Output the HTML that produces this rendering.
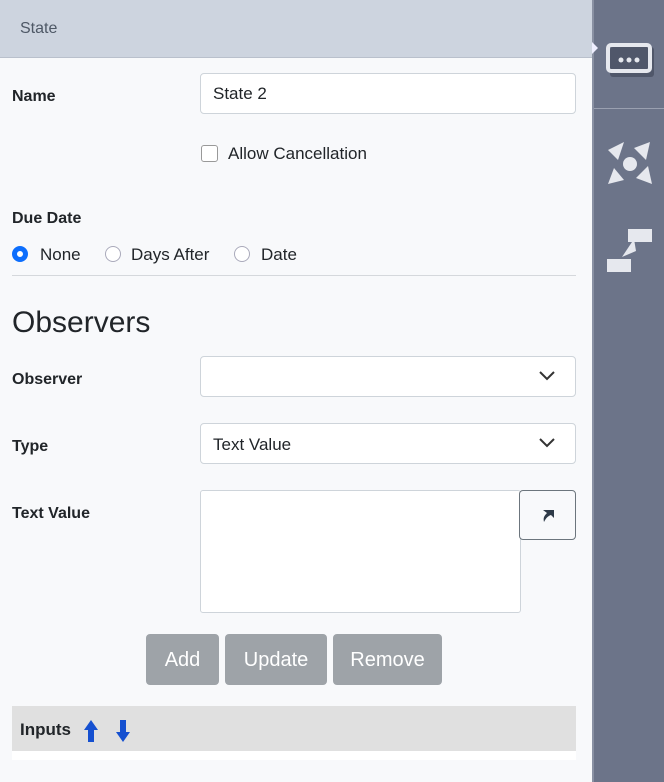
<!DOCTYPE html>
<html><head><style>
*{box-sizing:border-box;margin:0;padding:0}
body{width:664px;height:782px;background:#f8f9fb;font-family:"Liberation Sans",sans-serif;color:#212529;position:relative;overflow:hidden;font-size:16px}
.a{position:absolute}
.hdr{left:0;top:0;width:592px;height:58px;background:#cdd4df;border-bottom:1px solid #b9c0cc}
.side{left:592px;top:0;width:72px;height:782px;background:#6c7489;border-left:2px solid #8a91a3}
.lbl{font-weight:bold;font-size:16px;left:12px}
.inp{background:#fff;border:1px solid #ced4da;border-radius:4px;left:200px;width:376px;height:41px;padding:10px 12px;font-size:17px}
.btn{background:#9ea3a8;color:#fff;border-radius:4px;height:51px;top:634px;font-size:20px;text-align:center;line-height:53px}
.radio{width:16px;height:16px;border-radius:50%;border:1px solid #aab;background:#fff}
</style></head><body>
<div class="a hdr"><span class="a" style="left:20px;top:20px;color:#4e5866;font-size:16px">State</span></div>
<div class="a side">
<div class="a" style="left:-2px;top:42px;width:0;height:0;border-top:6px solid transparent;border-bottom:6px solid transparent;border-left:6px solid #eef"></div>
<svg class="a" style="left:10px;top:40px" width="52" height="40"><rect x="6" y="7" width="44" height="30" rx="3" fill="#50576a"/><rect x="4" y="5" width="42" height="26" rx="3" fill="none" stroke="#e6e8ee" stroke-width="4"/><circle cx="17" cy="20" r="2.5" fill="#e6e8ee"/><circle cx="25" cy="20" r="2.5" fill="#e6e8ee"/><circle cx="33" cy="20" r="2.5" fill="#e6e8ee"/></svg>
<div class="a" style="left:0;top:108px;width:72px;height:1px;background:#9aa0b0"></div>
<svg class="a" style="left:10px;top:138px" width="52" height="56" fill="#e6e8ee"><circle cx="26" cy="26" r="7"/><path d="M4 12 L20 4 L14 22Z"/><path d="M46 4 L30 10 L42 22Z"/><path d="M4 46 L10 30 L20 42Z"/><path d="M48 46 L32 40 L44 28Z"/></svg>
<svg class="a" style="left:10px;top:225px" width="52" height="52"><rect x="24" y="4" width="24" height="13" fill="#e6e8ee"/><rect x="3" y="34" width="24" height="13" fill="#e6e8ee"/><path d="M18 32 L30 14 L32 26Z" fill="#e6e8ee"/></svg>
</div>
<div class="a lbl" style="top:88px">Name</div>
<div class="a inp" style="top:73px">State 2</div>
<div class="a" style="left:201px;top:145px;width:17px;height:17px;border:1px solid #999;border-radius:3px;background:#fff"></div>
<div class="a" style="left:228px;top:144px;font-size:17px">Allow Cancellation</div>
<div class="a lbl" style="top:210px">Due Date</div>
<div class="a radio" style="left:12px;top:246px;border:5px solid #0d6efd"></div>
<div class="a" style="left:40px;top:245px;font-size:17px">None</div>
<div class="a radio" style="left:105px;top:246px"></div>
<div class="a" style="left:131px;top:245px;font-size:17px">Days After</div>
<div class="a radio" style="left:234px;top:246px"></div>
<div class="a" style="left:261px;top:245px;font-size:17px">Date</div>
<div class="a" style="left:12px;top:275px;width:564px;height:1px;background:#d5d8dc"></div>
<div class="a" style="left:12px;top:306px;font-size:30px">Observers</div>
<div class="a lbl" style="top:371px">Observer</div>
<div class="a inp" style="top:356px"></div>
<div class="a lbl" style="top:438px">Type</div>
<div class="a inp" style="top:423px;padding-top:11px">Text Value</div>
<svg class="a" style="left:538px;top:370px" width="18" height="12"><path d="M2 2 L9 9 L16 2" fill="none" stroke="#333" stroke-width="2"/></svg>
<svg class="a" style="left:538px;top:437px" width="18" height="12"><path d="M2 2 L9 9 L16 2" fill="none" stroke="#333" stroke-width="2"/></svg>
<div class="a lbl" style="top:505px">Text Value</div>
<div class="a" style="left:200px;top:490px;width:321px;height:123px;background:#fff;border:1px solid #ced4da;border-radius:3px"></div>
<div class="a" style="left:519px;top:490px;width:57px;height:50px;background:#f8f9fb;border:1px solid #6c757d;border-radius:4px"></div>
<svg class="a" style="left:540px;top:506px" width="16" height="18"><path d="M3 4 L14 4 L14 12 L11 9 C8 10 6 12 4 16 C3 12 4 10 7 7 Z" fill="#2e3a48"/></svg>
<div class="a btn" style="left:146px;width:73px">Add</div>
<div class="a btn" style="left:225px;width:102px">Update</div>
<div class="a btn" style="left:333px;width:109px">Remove</div>
<div class="a" style="left:12px;top:706px;width:564px;height:45px;background:#e0e0e0"></div>
<div class="a" style="left:12px;top:751px;width:564px;height:9px;background:#fff"></div>
<div class="a" style="left:20px;top:720px;font-weight:bold;font-size:17px">Inputs</div>
<svg class="a" style="left:81px;top:718px" width="60" height="26"><path d="M10 2 L17 12 L13 12 L13 24 L7 24 L7 12 L3 12Z" fill="#1550d0"/><path d="M39 2 L45 2 L45 14 L49 14 L42 24 L35 14 L39 14Z" fill="#1550d0"/></svg>
</body></html>
